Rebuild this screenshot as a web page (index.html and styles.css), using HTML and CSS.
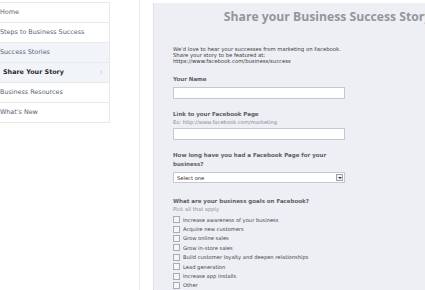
FILE: index.html
```html
<!DOCTYPE html>
<html lang="en">
<head>
<meta charset="UTF-8">
<title>Share Your Story</title>
<link rel="stylesheet" href="styles.css">
</head>
<body>
<div class="sidebar">
  <ul class="nav">
    <li>Home</li>
    <li>Steps to Business Success</li>
    <li class="soft">Success Stories</li>
    <li class="soft current">Share Your Story <span class="chev">&rsaquo;</span></li>
    <li>Business Resources</li>
    <li>What's New</li>
  </ul>
</div>

<div class="panel">
  <h1>Share your Business Success Story</h1>

  <p class="intro">We'd love to hear your successes from marketing on Facebook.<br>
  Share your story to be featured at:<br>
  https://www.facebook.com/business/success</p>

  <div class="field">
    <label>Your Name</label>
    <div class="input"></div>
  </div>

  <div class="field">
    <label>Link to your Facebook Page</label>
    <div class="hint">Ex: http://www.facebook.com/marketing</div>
    <div class="input near"></div>
  </div>

  <div class="field">
    <label>How long have you had a Facebook Page for your<br>business?</label>
    <div class="select">
      <span>Select one</span>
      <span class="arrow"></span>
    </div>
  </div>

  <div class="field goals">
    <label>What are your business goals on Facebook?</label>
    <div class="hint">Pick all that apply</div>
    <ul class="checks">
      <li><span class="box"></span>Increase awareness of your business</li>
      <li><span class="box"></span>Acquire new customers</li>
      <li><span class="box"></span>Grow online sales</li>
      <li><span class="box"></span>Grow in-store sales</li>
      <li><span class="box"></span>Build customer loyalty and deepen relationships</li>
      <li><span class="box"></span>Lead generation</li>
      <li><span class="box"></span>Increase app installs</li>
      <li><span class="box"></span>Other</li>
    </ul>
  </div>
</div>
</body>
</html>
```

FILE: styles.css
```css
html, body { height: 100%; }
body { margin: 0; background: #fff; display: flex; overflow: hidden; font-family: "DejaVu Sans", sans-serif; color: #333; }

.sidebar { width: 139px; flex: none; border-right: 1px solid #ececec; }
.nav { list-style: none; margin: 2px 0 0; padding: 0; width: 109px; border-top: 1px solid #e9e9e9; border-right: 1px solid #e9e9e9; }
.nav li { height: 19px; line-height: 19px; border-bottom: 1px solid #e9e9e9; font-size: 6.4px; color: #596173; position: relative; white-space: nowrap; }
.nav li.soft { background: #f1f4f8; }
.nav li.current { font-weight: bold; color: #2a2a2a; padding-left: 3px; }
.chev { position: absolute; right: 6px; top: 0; color: #c4c8ce; font-weight: normal; font-size: 8px; }

.panel { width: 309px; flex: none; margin: 3px 0 0 13px; padding: 0 0 0 19px; background: #edeff4; border-left: 1px dotted #d3d6dc; }
h1 { margin: 6px 0 0; font-family: "Open Sans", sans-serif; font-size: 12.2px; line-height: 16px; font-weight: bold; color: #93969b; text-align: center; white-space: nowrap; }

.intro { margin: 21px 0 0; font-size: 5.3px; line-height: 6px; color: #3a3a3a; }

.field { margin-top: 11px; }
.field.goals { margin-top: 14px; }
.field label { display: block; font-size: 5.5px; line-height: 9px; font-weight: bold; color: #5b5d61; }
.hint { font-size: 5.2px; line-height: 7px; color: #8a8d93; }
.input { width: 170px; height: 10px; margin-top: 3px; background: #fff; border: 1px solid #c3c9d4; }
.input.near { margin-top: 2px; }

.select { width: 170px; height: 9px; margin-top: 3px; background: #fff; border: 1px solid #c3c9d4; display: flex; align-items: center; justify-content: space-between; font-size: 5.2px; }
.select span:first-child { padding-left: 3px; }
.arrow { width: 7px; height: 7px; margin-right: 1px; border: 1px solid #9aa0a8; background: #f4f4f4; position: relative; box-sizing: border-box; }
.arrow::after { content: ""; position: absolute; left: 1px; top: 2px; border-left: 2px solid transparent; border-right: 2px solid transparent; border-top: 2px solid #333; }

.checks { list-style: none; margin: 2px 0 0; padding: 0; }
.checks li { height: 9.4px; display: flex; align-items: center; font-size: 5.2px; color: #444; }
.box { width: 7px; height: 7px; box-sizing: border-box; border: 1px solid #a9adb3; background: #f4f5f7; margin-right: 3px; flex: none; }
```
